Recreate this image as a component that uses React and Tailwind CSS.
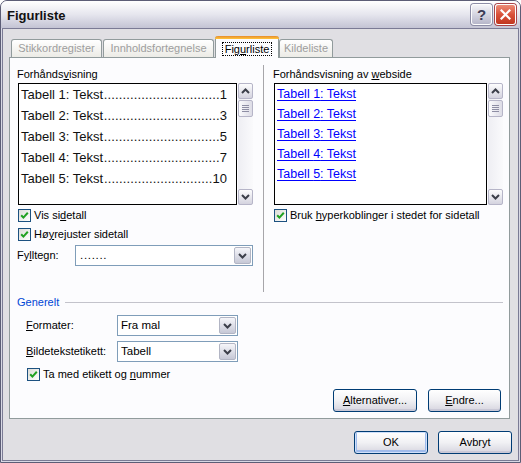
import React from "react";

function U({ children }) {
  return <span className="underline underline-offset-[1px]">{children}</span>;
}

function Check() {
  return (
    <span className="w-[13px] h-[13px] shrink-0 border border-[#1c5180] bg-linear-to-br from-[#dcdcd7] to-white flex items-center justify-center">
      <svg width="9" height="9" viewBox="0 0 9 9">
        <path d="M1.2 4.2 L3.4 6.6 L7.8 1.8" stroke="#21a121" strokeWidth="2" fill="none" />
      </svg>
    </span>
  );
}

function CheckRow({ children, className }) {
  return (
    <div className={"flex items-center h-[13px] " + className}>
      <Check />
      <span className="ml-[3px] leading-[13px] whitespace-nowrap">{children}</span>
    </div>
  );
}

function Chevron({ up }) {
  return (
    <svg width="9" height="6" viewBox="0 0 9 6">
      <path
        d={up ? "M1 5 L4.5 1.5 L8 5" : "M1 1 L4.5 4.5 L8 1"}
        stroke="#3c3f4a"
        strokeWidth="2"
        fill="none"
      />
    </svg>
  );
}

function Combo({ className, value, valueClass }) {
  return (
    <div className={"h-[21px] border border-[#7f9db9] bg-white flex items-center " + className}>
      <span className={"flex-1 pl-[3px] text-[11.5px] leading-none whitespace-nowrap " + (valueClass || "")}>{value}</span>
      <span className="w-[17px] h-[17px] mr-px rounded-[2px] border border-[#b2b5c4] bg-linear-to-b from-[#f6f6fa] to-[#c6c8d6] flex items-center justify-center">
        <Chevron />
      </span>
    </div>
  );
}

function ScrollBtn({ up }) {
  return (
    <div className="h-[16px] rounded-[2px] border border-[#b6b5c8] bg-linear-to-b from-[#fdfdfe] to-[#d4d3df] flex items-center justify-center">
      <Chevron up={up} />
    </div>
  );
}

function Scroll() {
  return (
    <div className="w-[15px] h-[122px] flex flex-col bg-linear-to-r from-[#eeeef3] to-[#fafafc] ml-px">
      <ScrollBtn up />
      <div className="mt-px h-[17px] rounded-[2px] border border-[#b6b5c8] bg-linear-to-r from-[#fbfbfd] to-[#dddce6] flex flex-col items-center justify-center gap-px">
        <span className="w-[7px] h-px bg-[#8e8ea4]" />
        <span className="w-[7px] h-px bg-[#8e8ea4]" />
        <span className="w-[7px] h-px bg-[#8e8ea4]" />
        <span className="w-[7px] h-px bg-[#8e8ea4]" />
      </div>
      <div className="flex-1" />
      <ScrollBtn />
    </div>
  );
}

function Btn({ children, className, def }) {
  return (
    <div
      className={
        "h-[23px] rounded-[3px] border border-[#003c74] bg-linear-to-b from-white via-[#f1f1f4] to-[#d6d5df] flex items-center justify-center leading-none " +
        (def ? "shadow-[inset_0_0_0_1px_#cfe0fb,inset_0_-1px_0_2px_#9fbbeb] " : "shadow-[inset_0_-2px_0_0_#c9c8d6] ") +
        className
      }
    >
      {children}
    </div>
  );
}

function Tab({ children, className }) {
  return (
    <div
      className={
        "h-[18px] rounded-t-[3px] border border-b-0 border-[#919b9c] bg-linear-to-b from-white to-[#ecebe6] text-[#9e9e9e] flex items-center justify-center whitespace-nowrap " +
        className
      }
    >
      {children}
    </div>
  );
}

export default function App() {
  const pages = [1, 3, 5, 7, 10];
  return (
    <div className="w-[521px] h-[463px] font-['Liberation_Sans',Arial,sans-serif] text-[11px] text-black">
      <div className="w-full h-full flex flex-col rounded-t-[7px] border border-[#5c5d76] overflow-hidden bg-[#c9c9d8]">
        {/* Title bar */}
        <div className="h-[27px] shrink-0 flex items-center bg-linear-to-b from-white via-[#e6e6ee] to-[#c4c4d4] pl-[6px] pr-[4px]">
          <span className="flex-1 text-[13px] font-bold leading-none pt-[2px] text-[#111]">Figurliste</span>
          <div className="w-[21px] h-[21px] rounded-[3px] border border-[#fdfdfd] shadow-[0_0_0_1px_#8d8da6] bg-linear-to-b from-[#f4f4f8] to-[#b7b7ca] flex items-center justify-center text-[15px] font-bold text-[#3b3b55] leading-none">
            ?
          </div>
          <div className="ml-[3px] w-[21px] h-[21px] rounded-[3px] border border-[#fdfdfd] shadow-[0_0_0_1px_#a9454a] bg-linear-to-b from-[#ec8c77] via-[#d9513a] to-[#c1371f] flex items-center justify-center">
            <svg width="11" height="11" viewBox="0 0 11 11">
              <path d="M1.5 1.5 L9.5 9.5 M9.5 1.5 L1.5 9.5" stroke="white" strokeWidth="2.2" strokeLinecap="square" />
            </svg>
          </div>
        </div>

        <div className="flex-1 flex flex-col border-l border-r border-b border-[#d8d8e4]">
          <div className="flex-1 flex flex-col border border-[#7b7b95] bg-[#e0dfe3] pt-[7px]">
            {/* Tabs */}
            <div className="flex items-end h-[21px] ml-[8px]">
              <Tab className="w-[91px] mr-px">Stikkordregister</Tab>
              <Tab className="w-[111px] mr-px">Innholdsfortegnelse</Tab>
              <div className="relative z-10 -mb-px w-[64px] h-[22px] rounded-t-[3px] border-x border-[#919b9c] bg-[#fcfcfe] flex flex-col">
                <div className="h-[3px] rounded-t-[3px] bg-linear-to-b from-[#e68b2c] to-[#ffc73c] -mx-px" />
                <div className="flex-1 flex items-center justify-center">
                  <span className="border border-dotted border-black px-[2px] leading-[12px]">
                    Fig<U>u</U>rliste
                  </span>
                </div>
              </div>
              <Tab className="w-[54px]">Kildeliste</Tab>
            </div>

            {/* Panel */}
            <div className="ml-[6px] w-[501px] h-[362px] border border-[#919b9c] bg-[#fcfcfe] pt-[7px] pl-[7px] pr-[6px] flex flex-col">
              <div className="flex h-[227px]">
                {/* Left column */}
                <div className="w-[246px] flex flex-col">
                  <div className="mt-[3px] leading-[13px]">
                    Forhånds<U>v</U>isning
                  </div>
                  <div className="mt-[2px] ml-px flex">
                    <div className="w-[219px] h-[122px] border border-black bg-white pl-[2px] pr-[9px] text-[13px] text-[#111]">
                      {pages.map((p, i) => (
                        <div key={i} className="flex h-[21px] items-center whitespace-nowrap">
                          <span>Tabell {i + 1}: Tekst</span>
                          <span className="flex-1 min-w-0 text-right tracking-[0.13px]">{".".repeat(p >= 10 ? 29 : 31)}</span>
                          <span>{p}</span>
                        </div>
                      ))}
                    </div>
                    <Scroll />
                  </div>
                  <CheckRow className="mt-[4px] ml-px">
                    Vis si<U>d</U>etall
                  </CheckRow>
                  <CheckRow className="mt-[6px] ml-px">
                    Hø<U>y</U>rejuster sidetall
                  </CheckRow>
                  <div className="mt-[4px] flex items-center">
                    <span className="w-[58px] leading-[13px]">
                      Fy<U>l</U>ltegn:
                    </span>
                    <Combo className="w-[178px]" value="......." valueClass="tracking-[0.7px] pl-[4px]" />
                  </div>
                </div>
                <div className="w-px bg-[#a7a6aa]" />
                {/* Right column */}
                <div className="ml-[9px] flex flex-col">
                  <div className="mt-[3px] leading-[13px]">
                    Forhåndsvisning av <U>w</U>ebside
                  </div>
                  <div className="mt-[2px] ml-px flex">
                    <div className="w-[213px] h-[122px] border border-black bg-white pl-[2px] text-[12.5px]">
                      {pages.map((p, i) => (
                        <div key={i} className="h-[20px] flex items-center">
                          <span className="text-[#0000ff] underline underline-offset-[2px] whitespace-nowrap">
                            Tabell {i + 1}: Tekst
                          </span>
                        </div>
                      ))}
                    </div>
                    <Scroll />
                  </div>
                  <CheckRow className="mt-[4px] ml-px">
                    Bruk <U>h</U>yperkoblinger i stedet for sidetall
                  </CheckRow>
                </div>
              </div>

              {/* Generelt */}
              <div className="mt-[4px] flex items-center h-[13px]">
                <span className="text-[#0046d5] leading-[13px]">Generelt</span>
                <span className="flex-1 ml-[6px] h-px bg-[#c3c3cb]" />
              </div>
              <div className="mt-[6px] ml-[9px] flex items-center">
                <span className="w-[91px] leading-[13px]">
                  <U>F</U>ormater:
                </span>
                <Combo className="w-[121px]" value="Fra mal" />
              </div>
              <div className="mt-[5px] ml-[9px] flex items-center">
                <span className="w-[91px] leading-[13px]">
                  <U>B</U>ildetekstetikett:
                </span>
                <Combo className="w-[121px]" value="Tabell" />
              </div>
              <CheckRow className="mt-[6px] ml-[10px]">
                Ta med etikett og <U>n</U>ummer
              </CheckRow>
              <div className="mt-[8px] mr-[2px] flex justify-end gap-[11px]">
                <Btn className="w-[84px]">
                  <U>A</U>lternativer...
                </Btn>
                <Btn className="w-[73px]">
                  <U>E</U>ndre...
                </Btn>
              </div>
            </div>

            {/* Bottom buttons */}
            <div className="mt-[12px] pr-[6px] flex justify-end gap-[10px]">
              <Btn className="w-[74px]" def>
                OK
              </Btn>
              <Btn className="w-[74px]">Avbryt</Btn>
            </div>
          </div>
        </div>
      </div>
    </div>
  );
}
